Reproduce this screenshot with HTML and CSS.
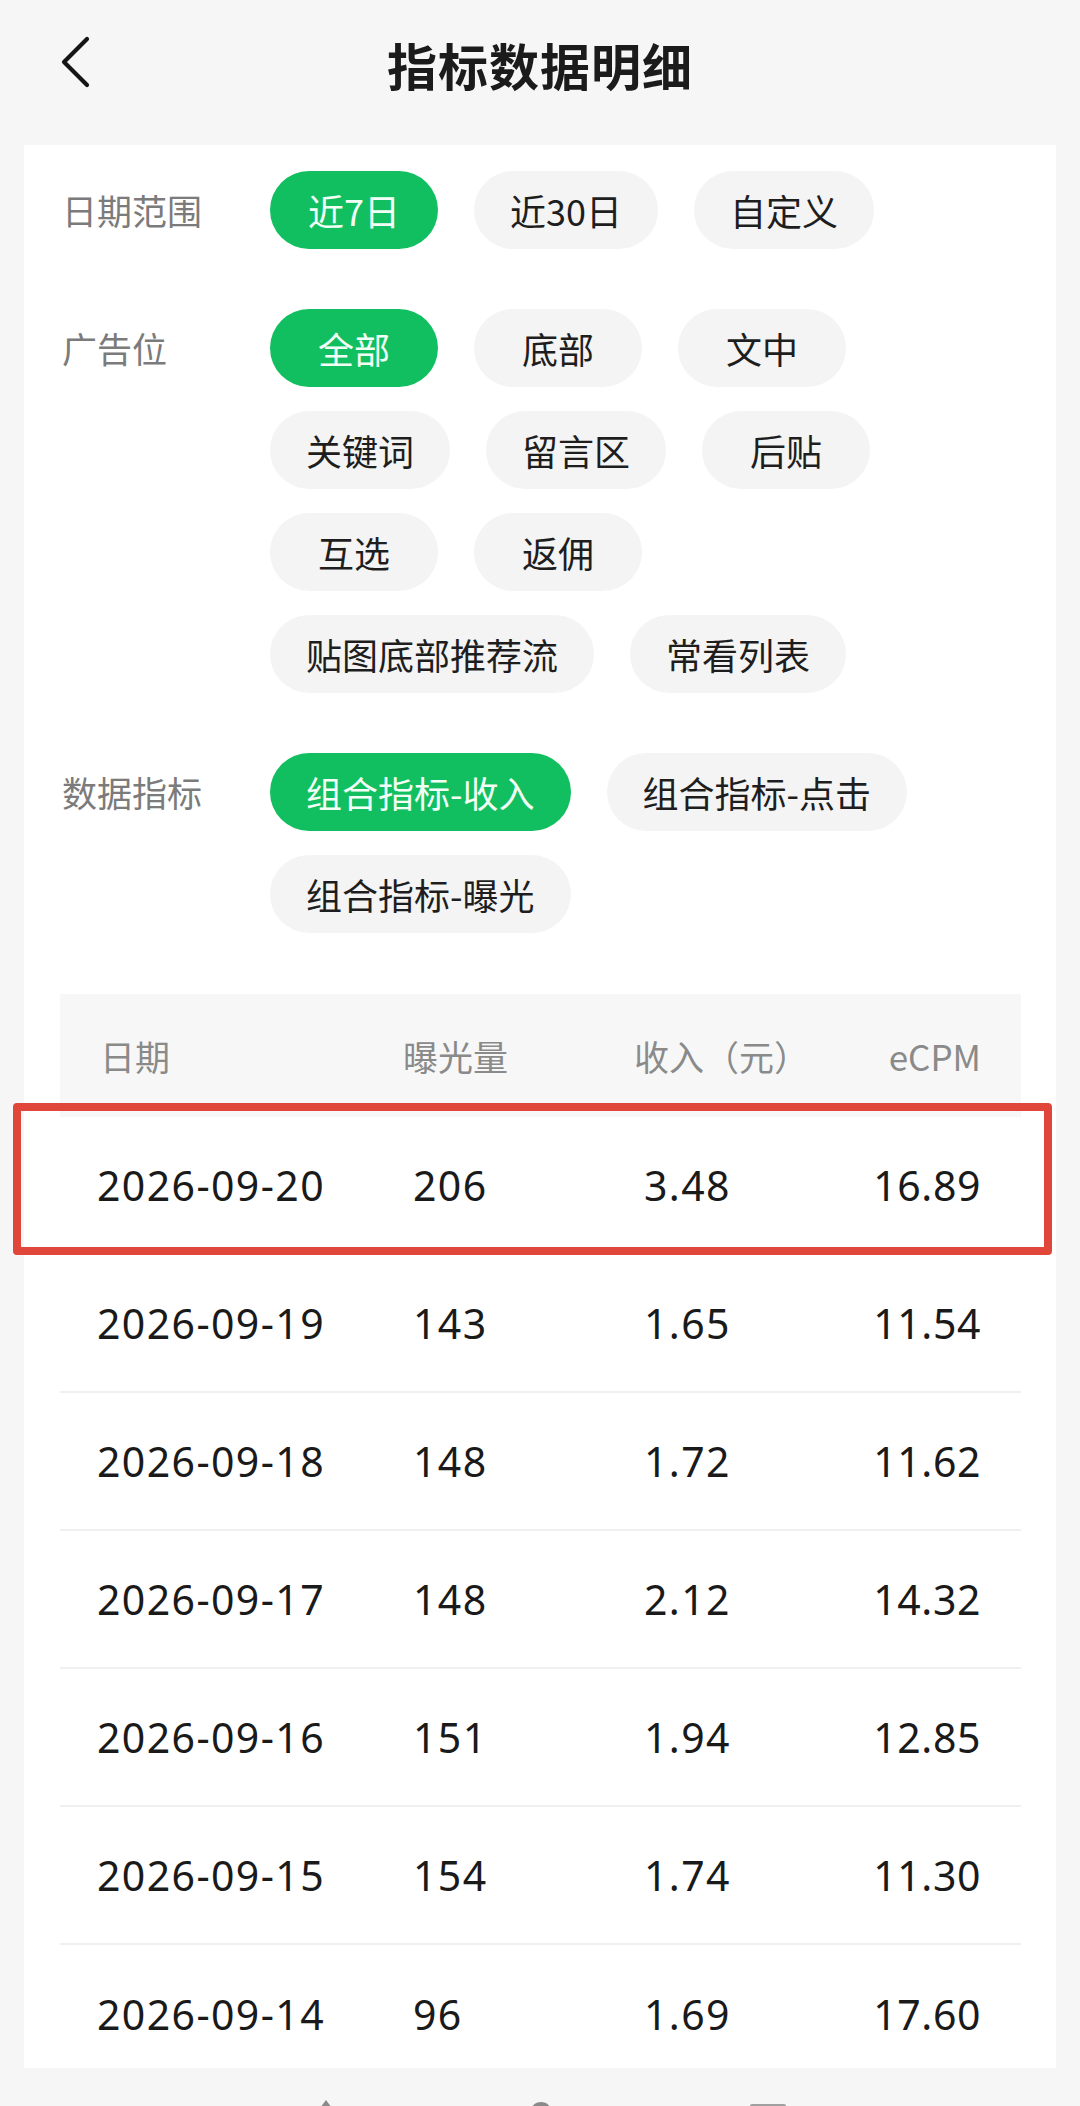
FILE: index.html
```html
<!DOCTYPE html>
<html lang="zh-CN">
<head>
<meta charset="utf-8">
<title>指标数据明细</title>
<link rel="stylesheet" href="styles.css">
</head>
<body>
<header class="topbar">
  <svg class="back" width="32" height="52" viewBox="0 0 32 52">
    <path d="M27 3 L4 26 L27 49" fill="none" stroke="#151515" stroke-width="4.2" stroke-linecap="round" stroke-linejoin="round"/>
  </svg>
  <h1 class="title">指标数据明细</h1>
</header>

<main class="card">
  <section class="filters">
    <div class="group">
      <div class="label">日期范围</div>
      <div class="chips">
        <span class="chip active">近7日</span>
        <span class="chip">近30日</span>
        <span class="chip">自定义</span>
      </div>
    </div>
    <div class="group">
      <div class="label">广告位</div>
      <div class="chips">
        <span class="chip active">全部</span>
        <span class="chip">底部</span>
        <span class="chip">文中</span>
        <span class="chip">关键词</span>
        <span class="chip">留言区</span>
        <span class="chip">后贴</span>
        <span class="chip">互选</span>
        <span class="chip">返佣</span>
        <span class="chip">贴图底部推荐流</span>
        <span class="chip">常看列表</span>
      </div>
    </div>
    <div class="group">
      <div class="label">数据指标</div>
      <div class="chips">
        <span class="chip active">组合指标-收入</span>
        <span class="chip">组合指标-点击</span>
        <span class="chip">组合指标-曝光</span>
      </div>
    </div>
  </section>

  <section class="table">
    <div class="thead">
      <span>日期</span>
      <span>曝光量</span>
      <span>收入（元）</span>
      <span class="num">eCPM</span>
    </div>
    <div class="row highlighted">
      <span>2026-09-20</span><span>206</span><span>3.48</span><span class="num">16.89</span>
      <div class="mark"></div>
    </div>
    <div class="row">
      <span>2026-09-19</span><span>143</span><span>1.65</span><span class="num">11.54</span>
    </div>
    <div class="row">
      <span>2026-09-18</span><span>148</span><span>1.72</span><span class="num">11.62</span>
    </div>
    <div class="row">
      <span>2026-09-17</span><span>148</span><span>2.12</span><span class="num">14.32</span>
    </div>
    <div class="row">
      <span>2026-09-16</span><span>151</span><span>1.94</span><span class="num">12.85</span>
    </div>
    <div class="row">
      <span>2026-09-15</span><span>154</span><span>1.74</span><span class="num">11.30</span>
    </div>
    <div class="row last">
      <span>2026-09-14</span><span>96</span><span>1.69</span><span class="num">17.60</span>
    </div>
  </section>
</main>

<nav class="navbar">
  <svg width="1080" height="38" viewBox="0 0 1080 38">
    <path d="M326 32 L320 40 L332 40 Z" fill="#8a8a8a"/>
    <circle cx="541" cy="45" r="11" fill="#8a8a8a"/>
    <rect x="750" y="36" width="36" height="8" rx="2" fill="#a0a0a0"/>
  </svg>
</nav>
</body>
</html>
```

FILE: styles.css
```css
html, body {
  margin: 0;
  padding: 0;
}

body {
  background: #f5f6f5;
  font-family: "Noto Sans", "Noto Sans CJK SC", sans-serif;
  color: #1a1a1a;
  width: 1080px;
  height: 2106px;
  overflow: hidden;
}

.topbar {
  position: relative;
  height: 128px;
  display: flex;
  align-items: center;
  justify-content: center;
}

.back {
  position: absolute;
  left: 60px;
  top: 36px;
}

.title {
  margin: 0;
  font-family: "Noto Sans CJK SC", sans-serif;
  font-size: 50px;
  font-weight: 700;
  color: #1b1b1b;
  letter-spacing: 1px;
}

.card {
  margin: 17px 24px 0 24px;
  background: #ffffff;
  padding: 26px 35px 0 36px;
  box-sizing: border-box;
}

.filters {
  display: flex;
  flex-direction: column;
  gap: 60px;
  padding-left: 2px;
  padding-right: 40px;
}

.group {
  display: flex;
  align-items: flex-start;
}

.label {
  width: 208px;
  flex: none;
  line-height: 78px;
  font-family: "Noto Sans CJK SC", sans-serif;
  font-size: 35px;
  color: #7b7b7b;
}

.chips {
  display: flex;
  flex-wrap: wrap;
  gap: 24px 36px;
  flex: 1;
}

.chip {
  box-sizing: border-box;
  min-width: 168px;
  height: 78px;
  padding: 0 36px;
  border-radius: 39px;
  background: #f4f4f4;
  color: #1e1e1e;
  font-family: "Noto Sans CJK SC", sans-serif;
  font-size: 36px;
  display: inline-flex;
  align-items: center;
  justify-content: center;
  white-space: nowrap;
}

.chip.active {
  background: #12bf60;
  color: #f2fff6;
}

.table {
  margin-top: 61px;
}

.thead {
  display: grid;
  grid-template-columns: 303px 231px 1fr auto;
  align-items: center;
  height: 123px;
  padding: 0 40px 0 40px;
  background: #f7f7f7;
  font-family: "Noto Sans CJK SC", sans-serif;
  font-size: 35px;
  color: #8a8a8a;
}

.row {
  position: relative;
  display: grid;
  grid-template-columns: 316px 231px 1fr auto;
  align-items: center;
  height: 138px;
  box-sizing: border-box;
  padding: 0 40px 0 37px;
  border-bottom: 2px solid #f0f0f0;
  font-size: 41px;
  letter-spacing: 1.4px;
  color: #1a1a1a;
}

.row.last {
  border-bottom: none;
}

.num {
  text-align: right;
}

.row .num {
  letter-spacing: 0.6px;
}

.mark {
  position: absolute;
  left: -47px;
  right: -31px;
  top: -14px;
  bottom: -2px;
  border: 8px solid #e0473a;
  border-radius: 4px;
  pointer-events: none;
}

.navbar {
  position: fixed;
  left: 0;
  bottom: 0;
  width: 1080px;
  height: 38px;
  background: #f5f6f5;
  overflow: hidden;
}

.navbar svg {
  display: block;
}
```
